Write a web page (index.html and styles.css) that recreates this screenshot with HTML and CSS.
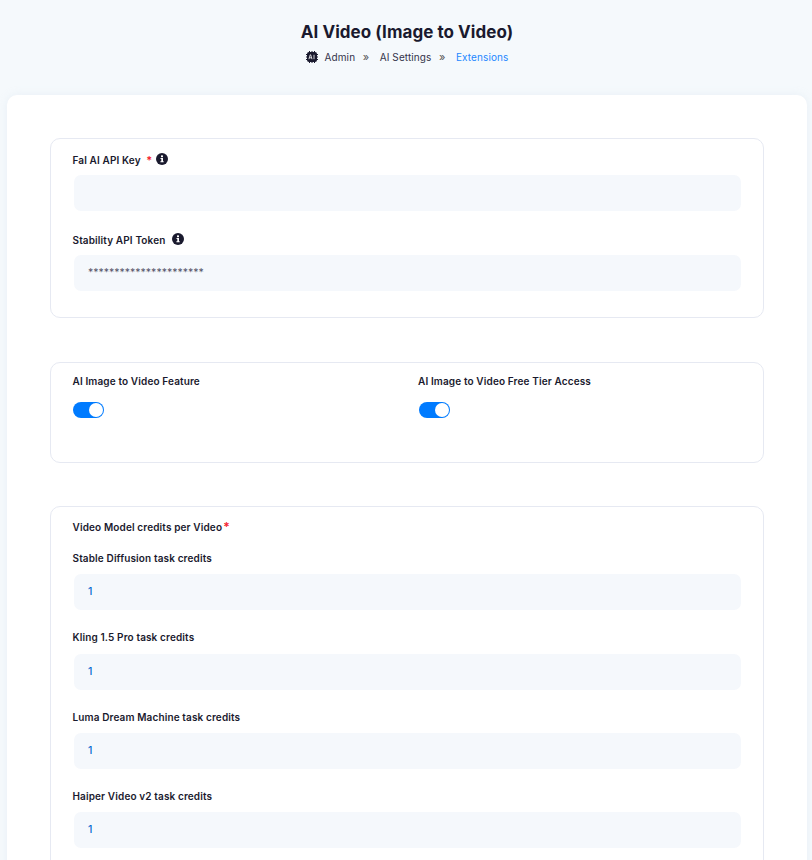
FILE: index.html
```html
<!DOCTYPE html>
<html lang="en">
<head>
<meta charset="utf-8">
<title>AI Video (Image to Video)</title>
<link rel="stylesheet" href="styles.css">
</head>
<body>
<header class="page-head">
  <h1 class="page-title">AI Video (Image to Video)</h1>
  <nav class="crumbs">
    <svg class="crumb-logo" viewBox="0 0 12 12" width="12" height="12" aria-hidden="true">
      <path d="M3.500 0v2M6 0v2M8.500 0v2M3.500 10v2M6 10v2M8.500 10v2M0 3.500h2M0 6h2M0 8.500h2M10 3.500h2M10 6h2M10 8.500h2" stroke="#1a1a2e" stroke-width="1"/>
      <rect x="1" y="1" width="10" height="10" rx="2" fill="#1a1a2e"/>
      <path d="M2.900 8.200l1.300-4.400h.5l1.300 4.400M3.400 6.800h2.100M8 3.800v4.400" stroke="#fff" stroke-width=".8" fill="none"/>
    </svg>
    <span class="crumb">Admin</span>
    <span class="sep">»</span>
    <span class="crumb">AI Settings</span>
    <span class="sep">»</span>
    <span class="crumb crumb-active">Extensions</span>
  </nav>
</header>
<main class="card">
  <section class="panel panel-keys">
    <div class="field">
      <div class="label"><span>Fal AI API Key</span><span class="req req-gap">*</span><svg class="info" viewBox="0 0 12 12" aria-hidden="true"><circle cx="6" cy="6" r="6" fill="#1a1a2e"/><rect x="5" y="2.400" width="2" height="1.800" fill="#fff"/><path d="M4.500 5h2.500v3.200h.7v1H4.400v-1h.9V6h-.8z" fill="#fff"/></svg></div>
      <div class="input"></div>
    </div>
    <div class="field">
      <div class="label"><span>Stability API Token</span><svg class="info info-wide" viewBox="0 0 12 12" aria-hidden="true"><circle cx="6" cy="6" r="6" fill="#1a1a2e"/><rect x="5" y="2.400" width="2" height="1.800" fill="#fff"/><path d="M4.500 5h2.500v3.200h.7v1H4.400v-1h.9V6h-.8z" fill="#fff"/></svg></div>
      <div class="input input-masked">**********************</div>
    </div>
  </section>

  <section class="panel panel-toggles">
    <div class="toggle-col">
      <div class="label">AI Image to Video Feature</div>
      <span class="switch"></span>
    </div>
    <div class="toggle-col">
      <div class="label">AI Image to Video Free Tier Access</div>
      <span class="switch"></span>
    </div>
  </section>

  <section class="panel panel-credits">
    <div class="label label-group"><span>Video Model credits per Video</span><span class="req req-group">*</span></div>
    <div class="field">
      <div class="label">Stable Diffusion task credits</div>
      <div class="input input-num">1</div>
    </div>
    <div class="field">
      <div class="label">Kling 1.5 Pro task credits</div>
      <div class="input input-num">1</div>
    </div>
    <div class="field">
      <div class="label">Luma Dream Machine task credits</div>
      <div class="input input-num">1</div>
    </div>
    <div class="field">
      <div class="label">Haiper Video v2 task credits</div>
      <div class="input input-num">1</div>
    </div>
  </section>
</main>
</body>
</html>
```
FILE: styles.css
```css
* { box-sizing: border-box; }
html, body { margin: 0; height: 100%; overflow: hidden; }
body {
  background: #f5f9fc;
  color: #1a1a2e;
  font-family: "Inter", "Open Sans", sans-serif;
}
.page-head {
  height: 95px;
  padding: 21px 0 0 2px;
  text-align: center;
}
.page-title {
  margin: 0;
  font-size: 17px;
  line-height: 22px;
  font-weight: 700;
  letter-spacing: .05px;
  color: #1a1a2e;
}
.crumbs {
  margin-top: 4px;
  height: 20px;
  display: flex;
  justify-content: center;
  align-items: center;
  font-size: 10px;
  letter-spacing: .1px;
  color: #33334a;
}
.crumb-logo { display: block; margin-right: 7px; }
.crumb-active { color: #1e88ff; }
.sep { font-size: 11px; color: #555; margin: 0 10.500px 0 7.500px; }
.card {
  margin: 0 5px 0 7px;
  padding: 43px 43px 0;
  background: #fff;
  border-radius: 10px;
  box-shadow: 0 0 8px rgba(200, 215, 230, .25);
  min-height: 900px;
}
.panel {
  border: 1px solid #e6e9f2;
  border-radius: 10px;
  padding: 0 22.500px 0 21.500px;
  margin-bottom: 44px;
}
.panel-keys { height: 180px; padding-top: 12px; }
.panel-toggles {
  height: 101px;
  margin-bottom: 43px;
  padding-top: 9px;
  display: grid;
  grid-template-columns: 345.500px 1fr;
}
.panel-credits { padding-top: 11px; padding-bottom: 40px; }
.label {
  font-size: 10px;
  line-height: 18px;
  font-weight: 600;
  letter-spacing: .13px;
  color: #1a1a2e;
  display: flex;
  align-items: center;
}
.label-group { margin-bottom: 13px; }
.req { color: #f5222d; font-size: 11px; }
.req-gap { margin-left: 5.500px; }
.req-group { font-size: 12px; margin-left: 1px; }
.info { width: 12px; height: 12px; margin-left: 4px; margin-top: -3px; display: block; }
.info-wide { margin-left: 6.500px; }
.field .input { margin: 6px 0 0 1.500px; }
.field + .field { margin-top: 20px; }
.panel-credits .field .input { margin-top: 7.330px; }
.panel-credits .field + .field { margin-top: 18px; }
.input {
  height: 36px;
  background: #f5f8fc;
  border-radius: 7px;
  padding: 0 14px 1px;
  display: flex;
  align-items: center;
  font-size: 10.500px;
}
.input-masked { color: #55556a; }
.input-num { color: #0a6ad0; font-weight: 500; }
.switch {
  display: block;
  position: relative;
  width: 31px;
  height: 16px;
  margin: 12px 0 0 .500px;
  background: #007bff;
  border-radius: 8px;
}
.switch::after {
  content: "";
  position: absolute;
  top: 1px;
  right: 1px;
  width: 14px;
  height: 14px;
  background: #fff;
  border-radius: 50%;
}
```
